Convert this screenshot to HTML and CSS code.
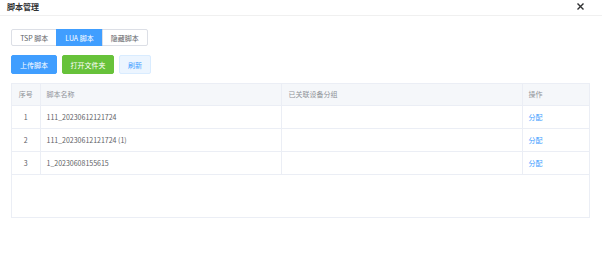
FILE: index.html
```html
<!DOCTYPE html>
<html lang="zh-CN">
<head>
    <meta charset="UTF-8">
    <title>脚本管理</title>
    <link rel="stylesheet" href="styles.css">
</head>
<body>
<div class="dialog">
    <div class="dialog-header">
        <span class="dialog-title">脚本管理</span>
        <span class="dialog-close">
            <svg width="7" height="7" viewBox="0 0 7 7">
                <path d="M1 1 L6 6 M6 1 L1 6" stroke="#303133" stroke-width="1.4" stroke-linecap="square"/>
            </svg>
        </span>
    </div>

    <div class="dialog-body">
        <div class="tabs">
            <div class="tab">TSP 脚本</div>
            <div class="tab active">LUA 脚本</div>
            <div class="tab">隐藏脚本</div>
        </div>

        <div class="toolbar">
            <button class="btn btn-primary">上传脚本</button>
            <button class="btn btn-success">打开文件夹</button>
            <button class="btn btn-plain">刷新</button>
        </div>

        <div class="table-wrap">
            <table>
                <thead>
                <tr>
                    <th class="col-index">序号</th>
                    <th class="col-name">脚本名称</th>
                    <th class="col-group">已关联设备分组</th>
                    <th class="col-action">操作</th>
                </tr>
                </thead>
                <tbody>
                <tr>
                    <td class="col-index">1</td>
                    <td>111_20230612121724</td>
                    <td></td>
                    <td><a class="link">分配</a></td>
                </tr>
                <tr>
                    <td class="col-index">2</td>
                    <td>111_20230612121724 (1)</td>
                    <td></td>
                    <td><a class="link">分配</a></td>
                </tr>
                <tr>
                    <td class="col-index">3</td>
                    <td>1_20230608155615</td>
                    <td></td>
                    <td><a class="link">分配</a></td>
                </tr>
                </tbody>
            </table>
        </div>
    </div>
</div>
</body>
</html>
```

FILE: styles.css
```css
* {
    margin: 0;
    padding: 0;
    box-sizing: border-box;
}

body {
    font-family: "Noto Sans CJK SC", "Noto Sans", sans-serif;
    background-color: #fff;
    color: #606266;
    font-size: 7px;
}

.dialog-header {
    height: 16px;
    display: flex;
    align-items: center;
    justify-content: space-between;
    padding: 0 18px 2px 7px;
    border-bottom: 1px solid #f0f0f0;
}

.dialog-title {
    font-size: 8px;
    font-weight: bold;
    color: #303133;
}

.dialog-close {
    display: flex;
}

.dialog-body {
    padding: 13px 12px 0 11px;
}

.tabs {
    display: flex;
    width: 137px;
    height: 17px;
}

.tab {
    flex: 1;
    display: flex;
    align-items: center;
    justify-content: center;
    border: 1px solid #dcdfe6;
    margin-left: -1px;
    color: #606266;
}

.tab:first-child {
    margin-left: 0;
    border-radius: 2px 0 0 2px;
}

.tab:last-child {
    border-radius: 0 2px 2px 0;
}

.tab.active {
    background-color: #409eff;
    border-color: #409eff;
    color: #fff;
}

.toolbar {
    display: flex;
    gap: 5px;
    margin-top: 9px;
}

.btn {
    height: 19px;
    font-family: inherit;
    font-size: 7px;
    border: 1px solid transparent;
    border-radius: 2px;
    cursor: pointer;
}

.btn-primary {
    width: 46px;
    background-color: #409eff;
    border-color: #409eff;
    color: #fff;
}

.btn-success {
    width: 52px;
    background-color: #67c23a;
    border-color: #67c23a;
    color: #fff;
}

.btn-plain {
    width: 32px;
    background-color: #ecf5ff;
    border-color: #d9ecff;
    color: #409eff;
}

.table-wrap {
    margin-top: 9px;
    height: 135px;
    border: 1px solid #ebeef5;
}

table {
    width: 100%;
    border-collapse: collapse;
    table-layout: fixed;
}

th, td {
    text-align: left;
    padding: 0 6px;
    border-right: 1px solid #ebeef5;
    border-bottom: 1px solid #ebeef5;
    font-weight: normal;
}

th:last-child, td:last-child {
    border-right: none;
}

th {
    height: 21px;
    background-color: #f5f7fa;
    color: #909399;
}

td {
    height: 23px;
}

.col-index {
    width: 28px;
    text-align: center;
    padding: 0;
}

.col-name {
    width: 241px;
}

.col-group {
    width: 241px;
    padding-left: 7px;
}

.link {
    color: #409eff;
    cursor: pointer;
}
```
